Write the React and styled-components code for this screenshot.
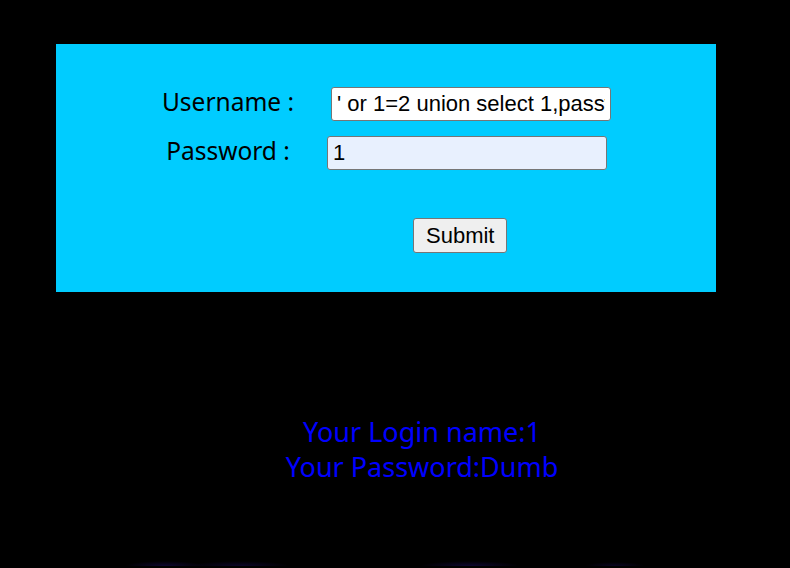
import React from "react";
import styled, { createGlobalStyle } from "styled-components";

const GlobalStyle = createGlobalStyle`
  body {
    margin: 0;
    background-color: #000;
    font-family: "Noto Sans", "Open Sans", sans-serif;
  }
`;

const Page = styled.div`
  width: 790px;
  min-height: 568px;
  background-color: #000;
  overflow: hidden;
`;

const LoginPanel = styled.div`
  width: 660px;
  height: 248px;
  margin: 44px 0 0 56px;
  padding-top: 43px;
  box-sizing: border-box;
  background-color: #00ccff;
`;

const FieldRow = styled.div`
  display: flex;
  align-items: center;
  height: 34px;
  margin-bottom: ${(p) => p.gap}px;
`;

const FieldLabel = styled.label`
  width: 160px;
  margin-left: 92px;
  margin-bottom: 6px;
  text-align: center;
  font-size: 24.5px;
  color: #000;
`;

const TextField = styled.input`
  width: 280px;
  height: 34px;
  margin-left: ${(p) => p.shift}px;
  padding: 0 5px;
  box-sizing: border-box;
  border: 1px solid #767676;
  border-radius: 3px;
  background-color: ${(p) => (p.autofilled ? "#e8f0fe" : "#fff")};
  font-family: "Liberation Sans", Arial, sans-serif;
  font-size: 22px;
  color: #000;
  outline: none;
`;

const SubmitRow = styled.div`
  padding-left: 357px;
`;

const SubmitButton = styled.button`
  height: 35px;
  padding: 0 12px;
  border: 1px solid #767676;
  border-radius: 3px;
  background-color: #efefef;
  font-family: "Liberation Sans", Arial, sans-serif;
  font-size: 22px;
  color: #000;
`;

const Result = styled.div`
  margin-top: 122px;
  padding-left: 54px;
  text-align: center;
  font-size: 27px;
  line-height: 35px;
  color: #0000ff;
`;

const Shadow = styled.div`
  height: 12px;
  margin-top: 70px;
  background:
    radial-gradient(ellipse 40px 5px at 165px 100%, rgba(40, 20, 140, 0.35), transparent),
    radial-gradient(ellipse 50px 5px at 240px 100%, rgba(40, 20, 140, 0.3), transparent),
    radial-gradient(ellipse 50px 5px at 470px 100%, rgba(40, 20, 140, 0.35), transparent),
    radial-gradient(ellipse 30px 4px at 615px 100%, rgba(40, 20, 140, 0.25), transparent);
`;

export default function App() {
  return (
    <Page>
      <GlobalStyle />
      <LoginPanel>
        <FieldRow gap={15}>
          <FieldLabel>Username :</FieldLabel>
          <TextField
            shift={23}
            name="uname"
            defaultValue="' or 1=2 union select 1,password from users where id=1 #"
          />
        </FieldRow>
        <FieldRow gap={48}>
          <FieldLabel>Password :</FieldLabel>
          <TextField shift={19} autofilled name="passwd" defaultValue="1" />
        </FieldRow>
        <SubmitRow>
          <SubmitButton type="submit">Submit</SubmitButton>
        </SubmitRow>
      </LoginPanel>
      <Result>
        <div>Your Login name:1</div>
        <div>Your Password:Dumb</div>
      </Result>
      <Shadow />
    </Page>
  );
}
